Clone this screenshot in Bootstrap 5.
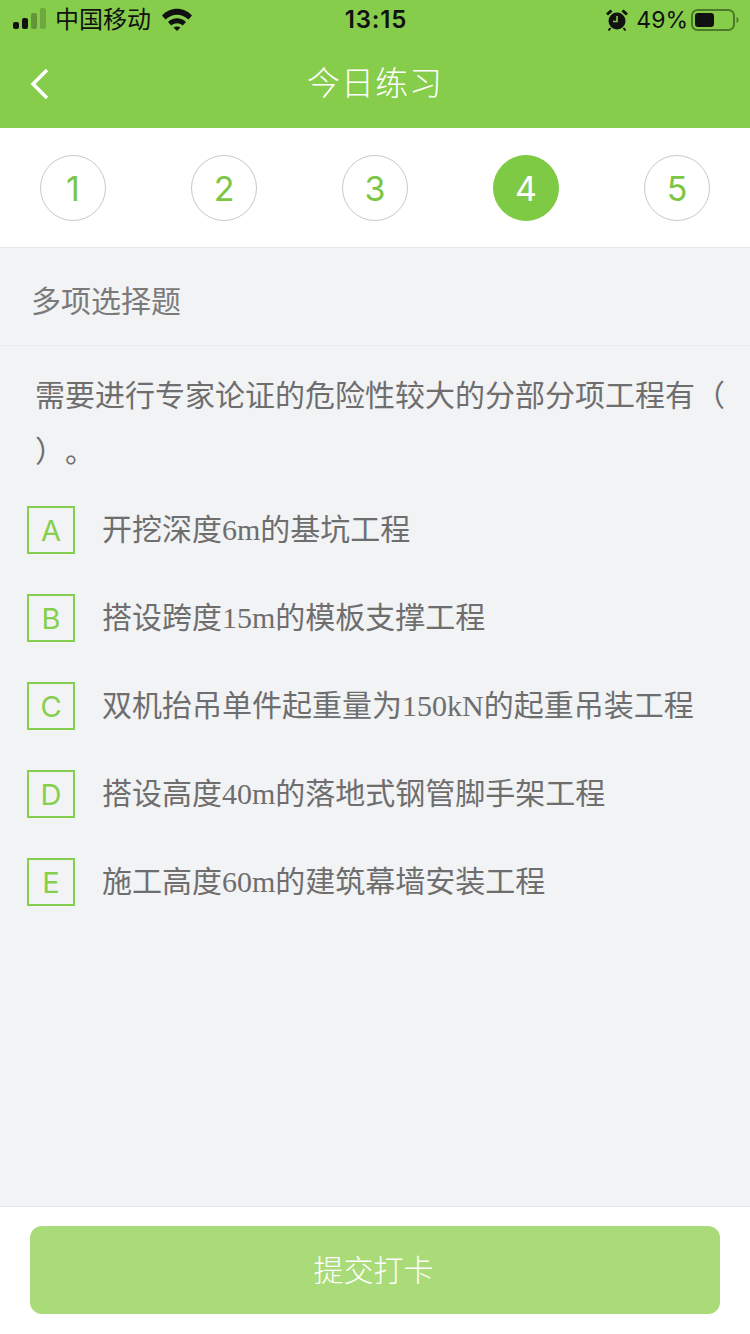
<!DOCTYPE html>
<html lang="zh-CN">
<head>
    <meta charset="UTF-8">
    <title>今日练习</title>
    <link href="https://cdn.jsdelivr.net/npm/bootstrap@5.3.0/dist/css/bootstrap.min.css" rel="stylesheet">
    <style>
        body {
            font-family: "Liberation Sans", "Noto Sans CJK SC", sans-serif;
            background: #f2f3f5;
            color: #666;
        }
        .page-wrap { height: 1334px; overflow: hidden; }
        .top-green { background: #87cd4c; height: 128px; flex: none; }
        .status-row { height: 40px; padding: 0 11px 0 13px; color: #111; font-size: 24px; line-height: 40px; }
        .status-side { width: 280px; }
        .wifi-mark { margin-left: 11px; }
        .status-time { font-size: 24px; font-weight: 600; letter-spacing: .8px; font-family: "Inter", "Liberation Sans", sans-serif; }
        .status-pct { font-family: "Inter", "Liberation Sans", sans-serif; font-size: 23px; margin-right: -1px; }
        .nav-row { height: 88px; }
        .nav-title { color: #fff; font-size: 33px; line-height: 88px; font-weight: 300; letter-spacing: 1px; }
        .back-btn { left: 30px; top: 28px; }
        .step-row { height: 120px; padding: 27px 40px 0; background: #fff; border-bottom: 1px solid #e8e9eb; flex: none; }
        .step-dot {
            width: 66px; height: 66px; border: 1px solid #c9c9c9; border-radius: 50%;
            color: #7cc646; font-size: 34px; font-family: "Inter", "Liberation Sans", sans-serif; font-weight: 400;
        }
        .step-dot.is-on { background: #7fca45; border-color: #7fca45; color: #fff; }
        .type-title { height: 98px; padding: 10px 0 0 31px; font-size: 30px; color: #7a7a7a; border-bottom: 1px solid #eaebed; flex: none; line-height: 1; }
        .q-text { padding: 22px 20px 0 35px; font-size: 30px; line-height: 56px; color: #6e6e6e; margin: 0; word-break: break-all; text-spacing-trim: space-all; }
        .opt-list { padding: 26px 0 0 27px; gap: 40px; }
        .opt-box {
            width: 48px; height: 48px; flex: none; border: 2px solid #86cf4e; color: #86cf4e; padding-top: 2px;
            font-size: 29px; font-family: "Inter", "Liberation Sans", sans-serif; font-weight: 400; margin-right: 27px;
        }
        .opt-text { font-family: "Liberation Serif", "Noto Sans CJK SC", serif; font-size: 30px; color: #6e6e6e; padding-bottom: 2px; }
        .bottom-bar { height: 128px; background: #fff; border-top: 1px solid #e6e7e9; padding: 19px 30px 0; flex: none; }
        .submit-btn {
            height: 88px; background: #a9dc78; border: 0; border-radius: 12px; color: #fff; padding-right: 15px;
            font-size: 30px; font-weight: 300;
        }
        .submit-btn:hover, .submit-btn:disabled { background: #a9dc78; color: #fff; opacity: 1; }
    </style>
</head>
<body>
<div class="page-wrap d-flex flex-column">
    <div class="top-green">
        <div class="status-row d-flex align-items-center justify-content-between">
            <div class="status-side d-flex align-items-center">
                <svg width="34" height="24" viewBox="0 1 34 24" class="me-2">
                    <rect x="0" y="15" width="6" height="7" rx="2" fill="#111"/>
                    <rect x="9" y="11" width="6" height="11" rx="2" fill="#111"/>
                    <rect x="18" y="6" width="6" height="16" rx="2" fill="#111" opacity=".3"/>
                    <rect x="27" y="1" width="6" height="21" rx="2" fill="#111" opacity=".2"/>
                </svg>
                <span>中国移动</span>
                <svg width="30" height="24" viewBox="0 0 30 24" class="wifi-mark">
                    <path d="M0 7.500C8-1.500 22-1.500 30 7.500L26.500 11.500C19.500 5 10.500 5 3.500 11.500Z" fill="#111"/>
                    <path d="M6 14C11 9 19 9 24 14L20.700 17.500C17 14.500 13 14.500 9.300 17.500Z" fill="#111"/>
                    <path d="M11.500 19.500C13.500 18 16.500 18 18.500 19.500L15 23Z" fill="#111"/>
                </svg>
            </div>
            <div class="status-time">13:15</div>
            <div class="status-side d-flex align-items-center justify-content-end">
                <svg width="22" height="24" viewBox="0 0 22 24" class="me-2">
                    <circle cx="11" cy="13" r="8.500" fill="#111"/>
                    <path d="M11 8v5.500H7" stroke="#87cd4c" stroke-width="1.600" fill="none"/>
                    <path d="M1 6.500L5.500 2.500M21 6.500L16.500 2.500" stroke="#111" stroke-width="3"/>
                    <path d="M4.500 20L2.500 22.500M17.500 20L19.500 22.500" stroke="#111" stroke-width="2"/>
                </svg>
                <span class="status-pct">49%</span>
                <svg width="48" height="24" viewBox="0 0 48 24" class="ms-1">
                    <rect x="1" y="2" width="42" height="20" rx="5.500" fill="none" stroke="#4c7a28" stroke-width="2"/>
                    <rect x="4" y="5" width="19" height="14" rx="3" fill="#111"/>
                    <path d="M45.500 9v6c1.500-.5 2-1.700 2-3s-.5-2.500-2-3z" fill="#4c7a28"/>
                </svg>
            </div>
        </div>
        <div class="nav-row position-relative text-center">
            <svg class="back-btn position-absolute" width="20" height="32" viewBox="0 0 20 32">
                <path d="M17 2L3 16L17 30" stroke="#fff" stroke-width="3.500" fill="none"/>
            </svg>
            <div class="nav-title">今日练习</div>
        </div>
    </div>

    <div class="step-row d-flex justify-content-between align-items-start">
        <div class="step-dot d-flex align-items-center justify-content-center">1</div>
        <div class="step-dot d-flex align-items-center justify-content-center">2</div>
        <div class="step-dot d-flex align-items-center justify-content-center">3</div>
        <div class="step-dot is-on d-flex align-items-center justify-content-center">4</div>
        <div class="step-dot d-flex align-items-center justify-content-center">5</div>
    </div>

    <div class="type-title d-flex align-items-center">多项选择题</div>

    <div class="flex-grow-1">
        <p class="q-text">需要进行专家论证的危险性较大的分部分项工程有（ ）。</p>
        <div class="opt-list d-flex flex-column">
            <div class="d-flex align-items-center">
                <div class="opt-box d-flex align-items-center justify-content-center">A</div>
                <div class="opt-text">开挖深度6m的基坑工程</div>
            </div>
            <div class="d-flex align-items-center">
                <div class="opt-box d-flex align-items-center justify-content-center">B</div>
                <div class="opt-text">搭设跨度15m的模板支撑工程</div>
            </div>
            <div class="d-flex align-items-center">
                <div class="opt-box d-flex align-items-center justify-content-center">C</div>
                <div class="opt-text">双机抬吊单件起重量为150kN的起重吊装工程</div>
            </div>
            <div class="d-flex align-items-center">
                <div class="opt-box d-flex align-items-center justify-content-center">D</div>
                <div class="opt-text">搭设高度40m的落地式钢管脚手架工程</div>
            </div>
            <div class="d-flex align-items-center">
                <div class="opt-box d-flex align-items-center justify-content-center">E</div>
                <div class="opt-text">施工高度60m的建筑幕墙安装工程</div>
            </div>
        </div>
    </div>

    <div class="bottom-bar">
        <button class="btn submit-btn w-100" type="button">提交打卡</button>
    </div>
</div>
<script src="https://cdn.jsdelivr.net/npm/bootstrap@5.3.0/dist/js/bootstrap.bundle.min.js"></script>
</body>
</html>
